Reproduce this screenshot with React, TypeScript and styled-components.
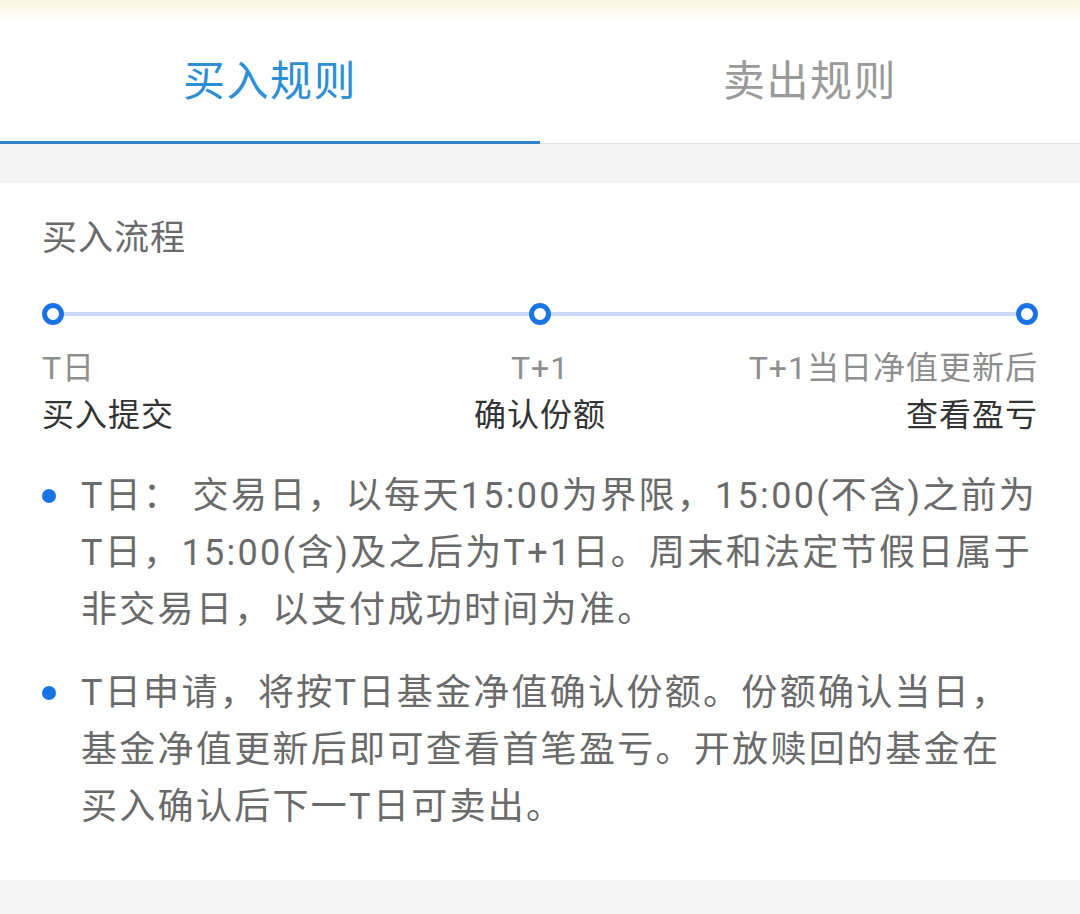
import React from "react";
import styled, { createGlobalStyle } from "styled-components";

const GlobalStyle = createGlobalStyle`
  html, body {
    margin: 0;
    padding: 0;
    background: #ffffff;
  }
  body {
    font-family: Roboto, "Noto Sans CJK SC", "Noto Sans", sans-serif;
  }
  * { box-sizing: border-box; }
`;

const Page = styled.div`
  width: 1080px;
  height: 914px;
  overflow: hidden;
  display: flex;
  flex-direction: column;
  background: #ffffff;
  & > * {
    flex-shrink: 0;
  }
`;

const TopStrip = styled.div`
  height: 20px;
  background: linear-gradient(180deg, #fcf6e2 0%, #fefbf1 70%, #ffffff 100%);
`;

const TabBar = styled.div`
  display: flex;
  height: 124px;
  background: #ffffff;
`;

const Tab = styled.div<{ $active?: boolean }>`
  flex: 1;
  display: flex;
  align-items: center;
  justify-content: center;
  padding-bottom: ${(p) => (p.$active ? "6px" : "8px")};
  border-bottom: ${(p) => (p.$active ? "3px solid #2f82c6" : "1px solid #e3e3e3")};
  font-size: 42px;
  letter-spacing: 1.5px;
  color: ${(p) => (p.$active ? "#2c8fd6" : "#9a9a9a")};
`;

const GrayBand = styled.div<{ $h: number }>`
  height: ${(p) => p.$h}px;
  background: #f4f4f4;
`;

const BottomBand = styled.div`
  flex: 1 0 auto;
  background: #f5f5f5;
`;

const Card = styled.div`
  background: #ffffff;
  padding: 32px 42px 44px 42px;
  display: flex;
  flex-direction: column;
`;

const SectionTitle = styled.div`
  font-size: 35px;
  line-height: 48px;
  letter-spacing: 1px;
  color: #6a6a6a;
`;

const Track = styled.div`
  margin-top: 40px;
  height: 22px;
  display: flex;
  align-items: center;
`;

const Node = styled.div`
  width: 22px;
  height: 22px;
  border-radius: 50%;
  border: 5px solid #1a74e6;
  background: #ffffff;
  flex-shrink: 0;
`;

const Rail = styled.div`
  flex: 1;
  height: 4px;
  background: #c9daf6;
`;

const LabelRow = styled.div<{ $top: number }>`
  margin-top: ${(p) => p.$top}px;
  display: grid;
  grid-template-columns: 1fr 1fr 1fr;
`;

const Label = styled.div<{ $align: "left" | "center" | "right"; $strong?: boolean }>`
  text-align: ${(p) => p.$align};
  font-size: 32px;
  line-height: 44px;
  letter-spacing: 1px;
  white-space: nowrap;
  color: ${(p) => (p.$strong ? "#333333" : "#8e8e8e")};
`;

const Bullets = styled.div`
  margin-top: 31px;
  display: flex;
  flex-direction: column;
  gap: 26px;
`;

const BulletItem = styled.div`
  display: flex;
  align-items: flex-start;
`;

const BulletDot = styled.span`
  width: 14px;
  height: 14px;
  border-radius: 50%;
  background: #1a74e6;
  margin-top: 21px;
  margin-right: 25px;
  flex-shrink: 0;
`;

const BulletText = styled.div`
  font-size: 36px;
  line-height: 57px;
  letter-spacing: 2.3px;
  color: #6a6a6a;
  white-space: nowrap;
`;

const Line = styled.span`
  display: block;
`;

const bullets: string[][] = [
  [
    "T日： 交易日，以每天15:00为界限，15:00(不含)之前为",
    "T日，15:00(含)及之后为T+1日。周末和法定节假日属于",
    "非交易日，以支付成功时间为准。",
  ],
  [
    "T日申请，将按T日基金净值确认份额。份额确认当日，",
    "基金净值更新后即可查看首笔盈亏。开放赎回的基金在",
    "买入确认后下一T日可卖出。",
  ],
];

export default function App() {
  return (
    <>
      <GlobalStyle />
      <Page>
        <TopStrip />
        <TabBar>
          <Tab $active>买入规则</Tab>
          <Tab>卖出规则</Tab>
        </TabBar>
        <GrayBand $h={39} />
        <Card>
          <SectionTitle>买入流程</SectionTitle>
          <Track>
            <Node />
            <Rail />
            <Node />
            <Rail />
            <Node />
          </Track>
          <LabelRow $top={21}>
            <Label $align="left">T日</Label>
            <Label $align="center">T+1</Label>
            <Label $align="right">T+1当日净值更新后</Label>
          </LabelRow>
          <LabelRow $top={3}>
            <Label $align="left" $strong>买入提交</Label>
            <Label $align="center" $strong>确认份额</Label>
            <Label $align="right" $strong>查看盈亏</Label>
          </LabelRow>
          <Bullets>
            {bullets.map((lines, i) => (
              <BulletItem key={i}>
                <BulletDot />
                <BulletText>
                  {lines.map((l, j) => (
                    <Line key={j}>{l}</Line>
                  ))}
                </BulletText>
              </BulletItem>
            ))}
          </Bullets>
        </Card>
        <BottomBand />
      </Page>
    </>
  );
}
